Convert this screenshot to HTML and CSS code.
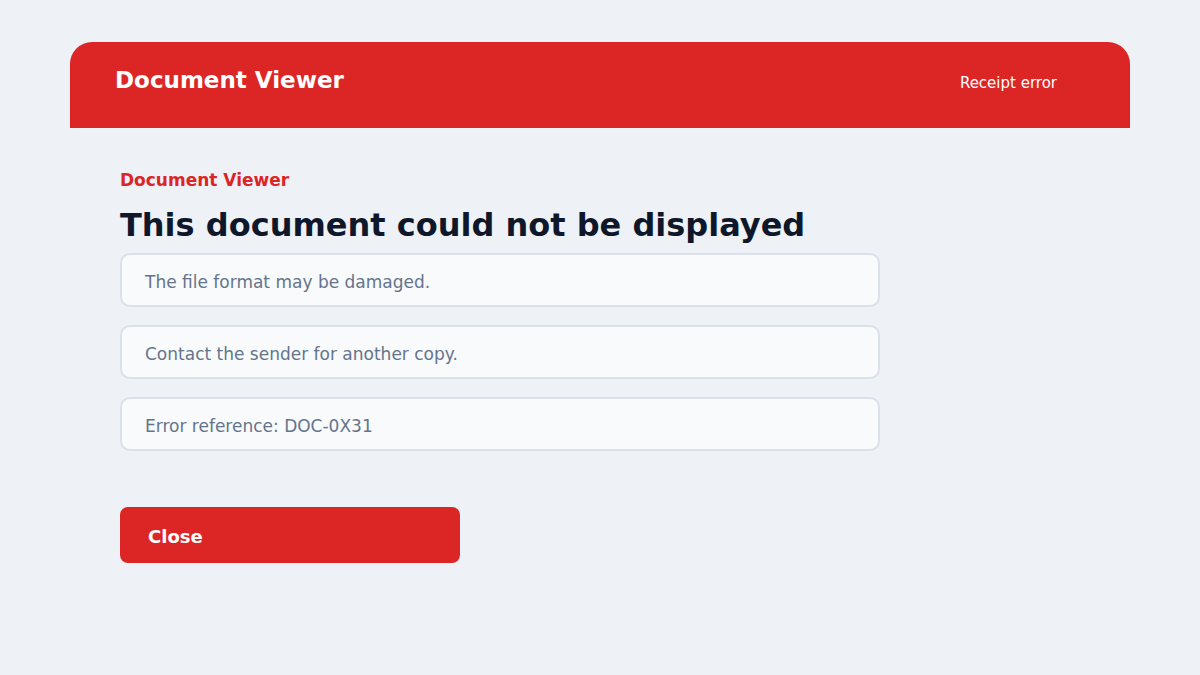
FILE: index.html
```html
<!DOCTYPE html>
<html>
<head>
    <link rel="stylesheet" href="styles.css">
    <title>Document Viewer</title>
</head>
<body>
<div class="viewer">
    <header class="viewer-header">
        <h1 class="viewer-title">Document Viewer</h1>
        <span class="viewer-status">Receipt error</span>
    </header>

    <main class="viewer-body">
        <p class="eyebrow">Document Viewer</p>
        <h2 class="headline">This document could not be displayed</h2>

        <div class="notes">
            <div class="note">The file format may be damaged.</div>
            <div class="note">Contact the sender for another copy.</div>
            <div class="note">Error reference: DOC-0X31</div>
        </div>

        <button class="close-btn">Close</button>
    </main>
</div>
</body>
</html>
```

FILE: styles.css
```css
body, html {
    margin: 0;
    padding: 0;
    height: 100%;
    background: #eef1f6;
    font-family: "DejaVu Sans", sans-serif;
}

.viewer {
    padding: 42px 70px 0;
}

.viewer-header {
    display: flex;
    justify-content: space-between;
    align-items: center;
    height: 86px;
    padding: 0 73px 0 45px;
    background: #dc2626;
    border-radius: 22px 22px 0 0;
    color: white;
}

.viewer-title {
    margin: 0 0 10px;
    font-size: 23px;
    font-weight: bold;
}

.viewer-status {
    font-size: 15px;
    margin-top: -4px;
}

.viewer-body {
    padding: 41px 50px 0;
}

.eyebrow {
    margin: 0;
    color: #dc2626;
    font-size: 17px;
    font-weight: bold;
    line-height: 22px;
}

.headline {
    margin: 14px 0 8px;
    color: #0f172a;
    font-size: 32px;
    font-weight: bold;
    line-height: 40px;
}

.notes {
    display: flex;
    flex-direction: column;
    gap: 18px;
    width: 760px;
}

.note {
    box-sizing: border-box;
    height: 54px;
    padding: 3px 23px 0;
    display: flex;
    align-items: center;
    background: #f8fafc;
    border: 2px solid #dae1eb;
    border-radius: 10px;
    color: #64748b;
    font-size: 17px;
}

.close-btn {
    display: block;
    width: 340px;
    height: 56px;
    margin-top: 56px;
    padding: 3px 28px 0;
    text-align: left;
    background: #dc2626;
    color: white;
    border: none;
    border-radius: 8px;
    font-family: inherit;
    font-size: 18px;
    font-weight: bold;
    cursor: pointer;
}
```
